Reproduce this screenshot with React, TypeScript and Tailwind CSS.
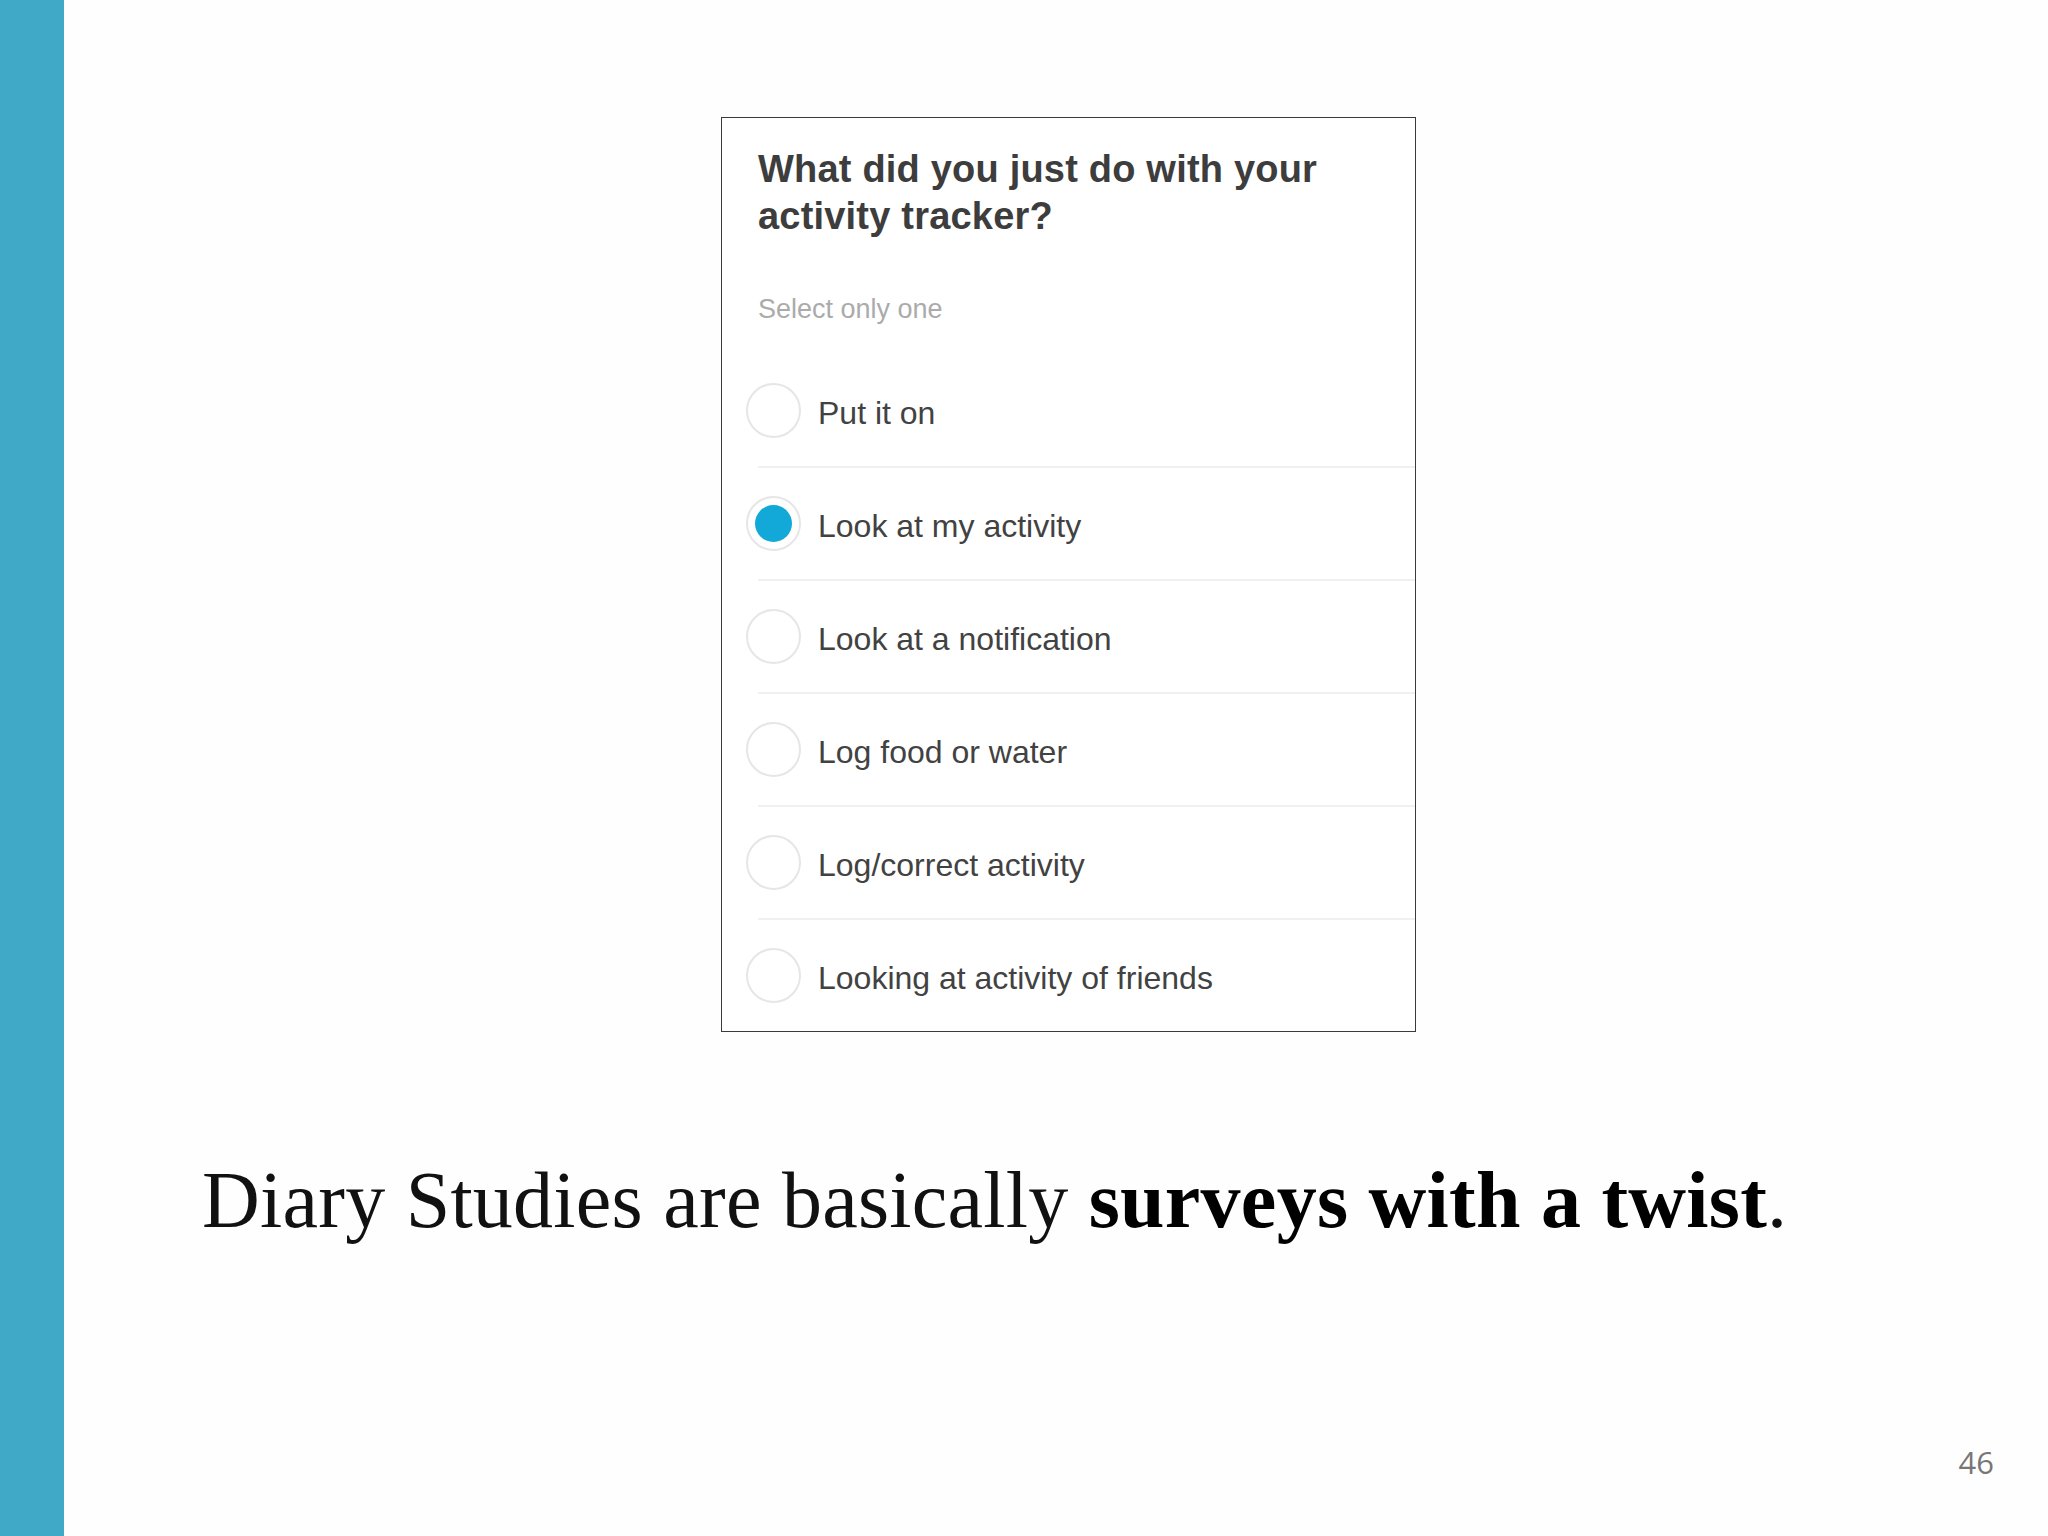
const options = [
  'Put it on',
  'Look at my activity',
  'Look at a notification',
  'Log food or water',
  'Log/correct activity',
  'Looking at activity of friends',
];

const selected = 1;

function Radio({ checked }: { checked: boolean }) {
  return (
    <div className="flex h-[55px] w-[55px] shrink-0 items-center justify-center rounded-full border-2 border-[#e6e6e6] bg-white">
      {checked && <div className="h-[37px] w-[37px] rounded-full bg-[#12a9d9]" />}
    </div>
  );
}

export default function App() {
  return (
    <div className="flex h-[1536px] w-[2048px] overflow-hidden bg-[#fefefe]">
      <div className="w-[64px] shrink-0 bg-[#3fa9c7]" />

      <div className="relative flex flex-1 flex-col">
        <div className="ml-[657px] mt-[117px] w-[695px] border border-[#3a3a3a] bg-white font-['Liberation_Sans',Arial,sans-serif]">
          <div className="pl-[36px] pt-[28px]">
            <h2 className="text-[38px] font-bold leading-[47px] tracking-[0.2px] text-[#3d3d3d]">
              What did you just do with your
              <br />
              activity tracker?
            </h2>
            <p className="mt-[53px] mb-[30px] text-[27px] leading-[32px] text-[#ababab]">
              Select only one
            </p>
          </div>

          <div className="pl-[24px]">
            {options.map((label, i) => (
              <div key={label}>
                <div className="flex h-[111px] items-center gap-[17px]">
                  <Radio checked={i === selected} />
                  <span className="mt-[5px] text-[32px] leading-[36px] text-[#424242]">{label}</span>
                </div>
                {i < options.length - 1 && <div className="ml-[12px] h-[2px] bg-[#f0f0f0]" />}
              </div>
            ))}
          </div>
        </div>

        <p className="ml-[138px] mt-[128px] whitespace-nowrap font-['Liberation_Serif','Times_New_Roman',serif] text-[80px] leading-[80px] tracking-[0.25px] text-[#111]">
          Diary Studies are basically <span className="font-bold text-black">surveys with a twist</span>.
        </p>

        <span className="absolute bottom-[58px] right-[54px] font-['Open_Sans',Arial,sans-serif] text-[31px] leading-[32px] text-[#777]">
          46
        </span>
      </div>
    </div>
  );
}
